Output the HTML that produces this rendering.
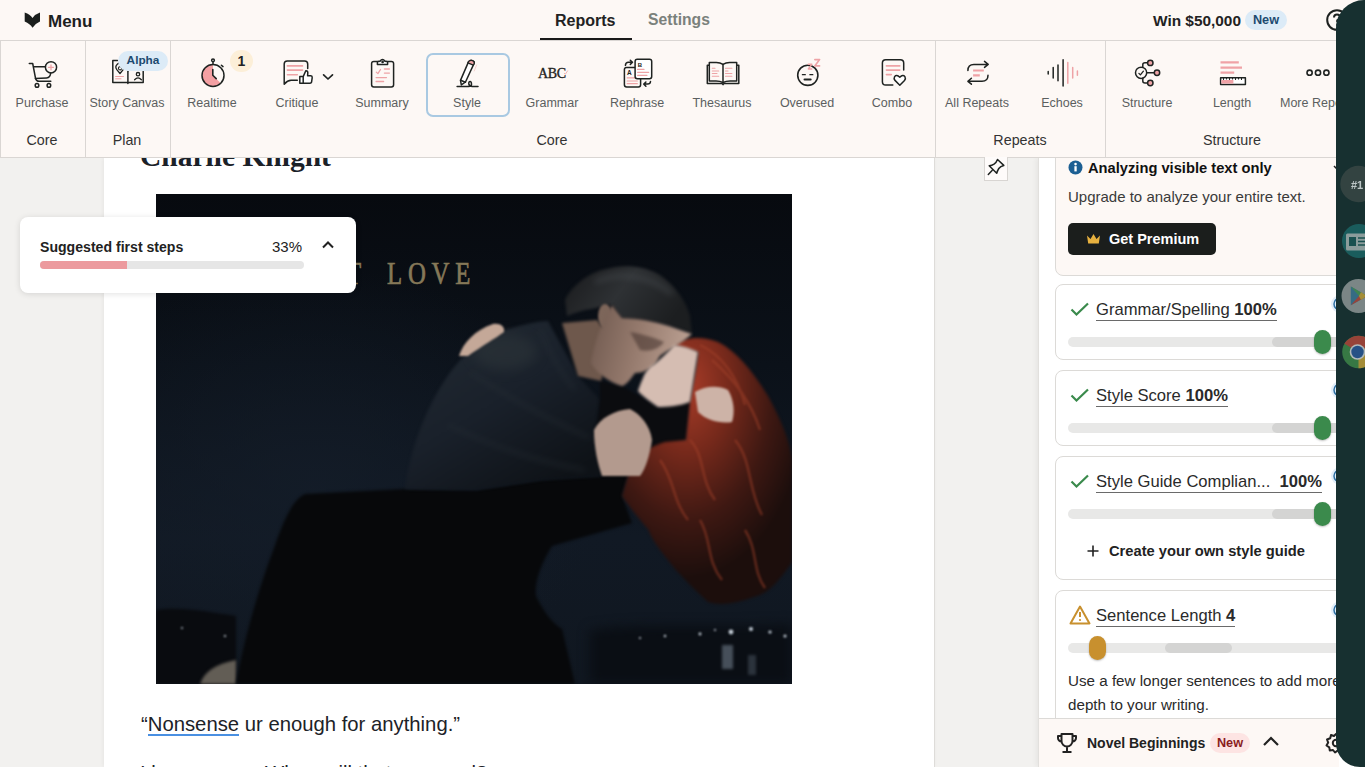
<!DOCTYPE html>
<html><head><meta charset="utf-8">
<style>
*{box-sizing:border-box;margin:0;padding:0}
html,body{width:1365px;height:767px;overflow:hidden;background:#f2f1ef;font-family:"Liberation Sans",sans-serif;color:#222}
.abs{position:absolute;white-space:nowrap}
#hdr{position:absolute;left:0;top:0;width:1365px;height:41px;background:#fdf8f5}
#tb{position:absolute;left:0;top:40px;width:1365px;height:118px;background:#fdf8f5;border-top:1px solid #dad6d3;border-bottom:1px solid #dad6d3;border-left:1px solid #dad6d3}
.vd{position:absolute;top:41px;width:1px;height:116px;background:#dad6d3}
.lbl{position:absolute;top:96px;font-size:12.5px;color:#5b5f5f;white-space:nowrap;text-align:center;width:120px;margin-left:-60px;line-height:15px}
.grp{position:absolute;top:132px;font-size:14.3px;color:#333;white-space:nowrap;text-align:center;width:120px;margin-left:-60px;line-height:17px}
.ico{position:absolute;overflow:visible}
#doc{position:absolute;left:104px;top:158px;width:831px;height:609px;background:#fff;border-right:1px solid #dedcd9;box-shadow:-1px 0 4px rgba(0,0,0,0.05)}
#rp{position:absolute;left:1038px;top:158px;width:298px;height:609px;background:#fff;border-left:1px solid #e2e0dd;box-shadow:-2px 0 5px rgba(0,0,0,0.05)}
.card{position:absolute;left:1055px;width:300px;border:1px solid #dcdad7;border-radius:8px;background:#fff}
.ttl{position:absolute;left:1096px;font-size:16.6px;color:#2a2a2a;white-space:nowrap;line-height:20px;border-bottom:1px solid #6a6a6a;padding-bottom:0}
.trk{position:absolute;left:1068px;height:10px;width:290px;border-radius:5px;background:#e8e8e7}
.thumb{position:absolute;width:17px;height:24px;border-radius:8.5px;background:#3b8a4c;box-shadow:0 1px 2px rgba(0,0,0,.25)}
</style></head><body>
<!-- document -->
<div id="doc"></div>
<div class="abs" style="left:140px;top:139px;font-family:'Liberation Serif',serif;font-weight:bold;font-size:29.5px;color:#1b2128;line-height:34px;white-space:nowrap">Charlie Knight</div>
<svg class="abs" style="left:156px;top:194px" width="636" height="490" viewBox="156 194 636 490">
 <defs>
  <linearGradient id="bg" x1="0" y1="0" x2="0" y2="1">
   <stop offset="0" stop-color="#070a0f"/><stop offset="0.35" stop-color="#0b1119"/><stop offset="0.7" stop-color="#111924"/><stop offset="1" stop-color="#101720"/>
  </linearGradient>
  <radialGradient id="glow" cx="0.25" cy="0.6" r="0.45"><stop offset="0" stop-color="#141d29" stop-opacity="0.8"/><stop offset="1" stop-color="#141d29" stop-opacity="0"/></radialGradient>
  <filter color-interpolation-filters="sRGB" id="b1" x="-30%" y="-30%" width="160%" height="160%"><feGaussianBlur stdDeviation="1"/></filter>
  <filter color-interpolation-filters="sRGB" id="b2" x="-20%" y="-20%" width="140%" height="140%"><feGaussianBlur stdDeviation="1.8"/></filter>
  <filter color-interpolation-filters="sRGB" id="b3" x="-30%" y="-30%" width="160%" height="160%"><feGaussianBlur stdDeviation="3"/></filter>
  <filter color-interpolation-filters="sRGB" id="b6" x="-40%" y="-40%" width="180%" height="180%"><feGaussianBlur stdDeviation="6"/></filter>
  <radialGradient id="hairG" cx="0.38" cy="0.18" r="0.72"><stop offset="0" stop-color="#a83c28"/><stop offset="0.35" stop-color="#76291b"/><stop offset="0.7" stop-color="#3e1812"/><stop offset="1" stop-color="#1c0e0c"/></radialGradient>
  <linearGradient id="shirtG" x1="0" y1="0" x2="0.7" y2="1"><stop offset="0" stop-color="#232b33"/><stop offset="0.55" stop-color="#19202a"/><stop offset="1" stop-color="#0e1217"/></linearGradient>
  <linearGradient id="faceG" x1="0" y1="0" x2="1" y2="0.2"><stop offset="0" stop-color="#6e584e"/><stop offset="0.5" stop-color="#94796c"/><stop offset="1" stop-color="#b99e90"/></linearGradient>
  <linearGradient id="hairM" x1="0" y1="0" x2="1" y2="0.4"><stop offset="0" stop-color="#18191b"/><stop offset="0.5" stop-color="#2e3134"/><stop offset="1" stop-color="#1c1e20"/></linearGradient>
 </defs>
 <rect x="156" y="194" width="636" height="490" fill="url(#bg)"/>
 <rect x="156" y="194" width="636" height="490" fill="url(#glow)"/>
 <!-- city -->
 <path d="M156 610 C180 606 210 612 236 616 L236 684 L156 684Z" fill="#090b0f" filter="url(#b2)"/>
 <path d="M590 630 C650 622 700 628 792 624 L792 684 L590 684Z" fill="#0a0e14" filter="url(#b6)"/>
 <g fill="#c5ced8" filter="url(#b1)">
  <circle cx="731" cy="632" r="2.4"/><circle cx="751" cy="629" r="2"/><circle cx="700" cy="634" r="1.4"/><circle cx="770" cy="632" r="1.6"/><circle cx="665" cy="636" r="1.2"/><circle cx="640" cy="638" r="1"/><circle cx="785" cy="636" r="1.5"/><circle cx="225" cy="636" r="1.1"/><circle cx="182" cy="628" r="0.9"/><circle cx="715" cy="630" r="1"/>
 </g>
 <rect x="722" y="645" width="11" height="24" fill="#8290a0" opacity="0.5" filter="url(#b2)"/>
 <rect x="748" y="655" width="8" height="20" fill="#5d6a78" opacity="0.4" filter="url(#b2)"/>
 <path d="M200 684 C204 672 215 664 236 660 L236 684Z" fill="#625d55" filter="url(#b2)"/>
 <!-- black body mass -->
 <path d="M236 684 C244 640 258 590 274 548 C284 520 292 500 305 494 L405 489 L476 490 L542 480 L602 476 L632 463 L622 496 L632 523 L552 546 C540 565 534 585 536 596 C545 615 555 625 562 629 L575 684Z" fill="#07080a" filter="url(#b2)"/>
 <!-- man's shirt -->
 <path d="M405 489 C410 450 425 410 445 380 C458 360 475 342 505 330 C525 324 540 321 548 321 L578 376 L600 400 L596 430 L602 476 L542 480 L476 490Z" fill="url(#shirtG)" filter="url(#b2)"/>
 <ellipse cx="505" cy="352" rx="32" ry="18" fill="#2c3439" opacity="0.6" filter="url(#b6)"/>
 <g fill="none" stroke="#2e363c" stroke-width="3" opacity="0.45" filter="url(#b3)">
  <path d="M470 372 C500 392 545 418 590 438"/>
  <path d="M448 425 C490 445 535 462 585 470"/>
  <path d="M540 330 C548 350 560 372 575 390"/>
 </g>
 <!-- woman's black top -->
 <path d="M600 381 L622 386 L658 407 L690 402 L686 440 L632 463 L602 476 L596 430 L600 400Z" fill="#0b0c0f" filter="url(#b2)"/>
 <!-- red hair -->
 <path d="M674 344 C685 338 700 335 718 342 C735 350 752 370 768 396 C780 418 790 440 792 460 L792 562 C780 580 770 592 757 596 C735 604 720 606 708 602 C695 590 685 580 675 569 C660 550 652 540 648 529 C640 520 628 505 622 496 L632 463 C640 452 655 445 665 442 L686 440 L690 402 C694 380 697 365 698 352 C690 350 680 348 674 344Z" fill="url(#hairG)" filter="url(#b2)"/>
 <g fill="none" stroke="#a4422a" stroke-width="2.4" opacity="0.5" filter="url(#b1)">
  <path d="M700 345 C722 355 738 378 745 405"/>
  <path d="M712 360 C735 380 752 405 760 430"/>
  <path d="M690 440 C705 455 700 480 715 500"/>
  <path d="M735 440 C752 460 748 490 762 515"/>
  <path d="M660 460 C675 480 672 500 688 520"/>
  <path d="M700 520 C712 540 706 560 722 580"/>
  <path d="M745 530 C758 550 752 570 765 588"/>
 </g>
 <!-- man hair -->
 <path d="M565 300 C572 285 590 272 606 269 C620 265 640 264 658 274 C672 282 686 300 690 316 L692 334 C685 330 675 327 669 326 C655 322 640 318 622 318 L612 305 C600 306 590 310 585 310 C578 312 572 314 567 316Z" fill="url(#hairM)" filter="url(#b2)"/>
 <path d="M595 282 C618 272 648 274 672 294" fill="none" stroke="#4e5256" stroke-width="4" opacity="0.5" filter="url(#b3)"/>
 <!-- man neck, ear & face -->
 <path d="M562 323 L597 320 L612 340 L601 381 L578 376Z" fill="#6e584c" filter="url(#b2)"/>
 <ellipse cx="605" cy="316" rx="7" ry="12" fill="#7d665a" filter="url(#b1)"/>
 <path d="M612 305 L622 318 C640 318 655 322 669 326 L692 334 C680 345 668 350 660 356 L656 363 C650 370 642 373 635 373 C630 380 626 385 622 386 C608 382 596 372 591 363 C594 345 600 325 612 305Z" fill="url(#faceG)" filter="url(#b2)"/>
 <path d="M630 332 C642 334 655 338 664 342 C658 350 648 352 640 350Z" fill="#4a3832" opacity="0.6" filter="url(#b2)"/>
 <!-- woman's face -->
 <path d="M674 345 C680 345 690 348 698 352 L690 402 C680 406 668 407 658 407 C648 400 640 394 638 391 C640 385 642 380 643 378 C645 372 650 366 653 365 C660 360 668 352 674 345Z" fill="#d5bdb2" filter="url(#b2)"/>
 <!-- hands -->
 <path d="M459 356 C463 343 475 330 493 324 C500 323 505 326 504 332 C496 338 482 346 468 356Z" fill="#c4a898" filter="url(#b1)"/>
 <path d="M594 430 C600 418 615 410 630 409 C640 414 650 425 652 440 C650 455 645 470 640 476 L602 476 C598 465 594 448 594 430Z" fill="#b39a8e" filter="url(#b1)"/>
 <path d="M695 392 C705 386 718 385 728 390 C734 400 735 412 732 422 C720 424 706 420 698 412Z" fill="#cdb3a7" filter="url(#b1)"/>
 <!-- title text -->
 <text transform="translate(387,284) scale(0.8,1)" font-family="Liberation Serif" font-size="31" fill="#857858" stroke="#857858" stroke-width="0.7" letter-spacing="7.2">LOVE</text>
 <text transform="translate(346,284) scale(0.8,1)" font-family="Liberation Serif" font-size="31" fill="#857858" stroke="#857858" stroke-width="0.7">T</text>
</svg>
<div class="abs" style="left:141px;top:712px;font-size:20.3px;color:#1d2227;line-height:24px;white-space:nowrap">&ldquo;Nonsense ur enough for anything.&rdquo;</div>
<div class="abs" style="left:148px;top:734px;width:91px;height:2px;background:#4a90e2"></div>
<div class="abs" style="left:140px;top:761px;font-size:20.3px;color:#1d2227;line-height:24px;white-space:nowrap">I know, ur so. When will that ever end?</div>

<!-- suggested first steps card -->
<div class="abs" style="left:20px;top:217px;width:336px;height:76px;background:#fff;border-radius:8px;box-shadow:0 1px 6px rgba(0,0,0,0.12)"></div>
<div class="abs" style="left:40px;top:239px;font-size:14.1px;font-weight:bold;color:#222;line-height:17px;white-space:nowrap">Suggested first steps</div>
<div class="abs" style="left:272px;top:238px;font-size:15px;color:#222;line-height:17px">33%</div>
<svg class="ico" style="left:321px;top:240px" width="14" height="10" viewBox="0 0 14 10"><path d="M2 7.5 L7 2.5 L12 7.5" fill="none" stroke="#222" stroke-width="2"/></svg>
<div class="abs" style="left:40px;top:261px;width:264px;height:8px;border-radius:4px;background:#e6e6e6;overflow:hidden"><div style="width:87px;height:8px;background:#ec9a9e"></div></div>



<!-- right panel -->
<div id="rp"></div>
<!-- card 1 -->
<div class="card" style="top:120px;height:156px;background:#fdf8f5"></div>
<svg class="ico" style="left:1068px;top:160px" width="15" height="15" viewBox="0 0 15 15"><circle cx="7.5" cy="7.5" r="7" fill="#1c5f93"/><rect x="6.4" y="6.2" width="2.3" height="5.2" fill="#fff"/><circle cx="7.55" cy="4.1" r="1.3" fill="#fff"/></svg>
<div class="abs" style="left:1088px;top:159px;font-size:14.7px;font-weight:bold;color:#111;line-height:18px;white-space:nowrap">Analyzing visible text only</div>
<div class="abs" style="left:1068px;top:188px;font-size:15px;color:#3a3a3a;line-height:18px;white-space:nowrap">Upgrade to analyze your entire text.</div>
<div class="abs" style="left:1068px;top:223px;width:148px;height:32px;border-radius:5px;background:#1b1e1c"></div>
<svg class="ico" style="left:1086px;top:233px" width="15" height="12" viewBox="0 0 15 12"><path d="M1 2.5 L4.5 6 L7.5 1 L10.5 6 L14 2.5 L12.8 10.5 L2.2 10.5Z" fill="#e7b13f"/></svg>
<div class="abs" style="left:1109px;top:230px;font-size:14.5px;font-weight:bold;color:#fff;line-height:18px;white-space:nowrap">Get Premium</div>

<svg class="ico" style="left:1330px;top:162px" width="8" height="8" viewBox="0 0 8 8"><path d="M4 4 L7 7" stroke="#222" stroke-width="1.5"/></svg>
<!-- card 2 -->
<div class="card" style="top:284px;height:76px"></div>
<svg class="ico" style="left:1070px;top:302px" width="20" height="15" viewBox="0 0 20 15"><path d="M1.5 7.5 L6.5 12.5 L18 1.5" fill="none" stroke="#3a8a4c" stroke-width="2.2"/></svg>
<div class="ttl" style="top:300px">Grammar/Spelling <b>100%</b></div>
<div class="trk" style="top:337px"></div>
<div class="abs" style="left:1272px;top:337px;width:80px;height:10px;border-radius:5px;background:#d4d4d3"></div>
<div class="thumb" style="left:1314px;top:330px"></div>

<!-- card 3 -->
<div class="card" style="top:370px;height:76px"></div>
<svg class="ico" style="left:1070px;top:388px" width="20" height="15" viewBox="0 0 20 15"><path d="M1.5 7.5 L6.5 12.5 L18 1.5" fill="none" stroke="#3a8a4c" stroke-width="2.2"/></svg>
<div class="ttl" style="top:386px">Style Score <b>100%</b></div>
<div class="trk" style="top:423px"></div>
<div class="abs" style="left:1272px;top:423px;width:80px;height:10px;border-radius:5px;background:#d4d4d3"></div>
<div class="thumb" style="left:1314px;top:416px"></div>

<!-- card 4 -->
<div class="card" style="top:456px;height:124px"></div>
<svg class="ico" style="left:1070px;top:474px" width="20" height="15" viewBox="0 0 20 15"><path d="M1.5 7.5 L6.5 12.5 L18 1.5" fill="none" stroke="#3a8a4c" stroke-width="2.2"/></svg>
<div class="ttl" style="top:472px">Style Guide Complian...&nbsp; <b>100%</b></div>
<div class="trk" style="top:509px"></div>
<div class="abs" style="left:1272px;top:509px;width:80px;height:10px;border-radius:5px;background:#d4d4d3"></div>
<div class="thumb" style="left:1314px;top:502px"></div>
<svg class="ico" style="left:1087px;top:545px" width="12" height="12" viewBox="0 0 12 12"><path d="M6 0.5 V11.5 M0.5 6 H11.5" stroke="#222" stroke-width="1.6"/></svg>
<div class="abs" style="left:1109px;top:542px;font-size:14.7px;font-weight:bold;color:#222;line-height:18px;white-space:nowrap">Create your own style guide</div>

<!-- card 5 -->
<div class="card" style="top:590px;height:200px"></div>
<svg class="ico" style="left:1069px;top:605px" width="22" height="20" viewBox="0 0 22 20"><path d="M11 1.5 L20.5 18.5 H1.5Z" fill="none" stroke="#c8902e" stroke-width="2" stroke-linejoin="round"/><path d="M11 7 V12" stroke="#c8902e" stroke-width="2"/><circle cx="11" cy="15" r="1.1" fill="#c8902e"/></svg>
<div class="ttl" style="top:606px">Sentence Length <b>4</b></div>
<div class="trk" style="top:643px"></div>
<div class="abs" style="left:1165px;top:643px;width:67px;height:10px;border-radius:5px;background:#d4d4d3"></div>
<div class="thumb" style="left:1089px;top:636px;background:#c8902e"></div>
<div class="abs" style="left:1068px;top:669px;font-size:15.2px;color:#2a2a2a;line-height:24px;white-space:nowrap">Use a few longer sentences to add more<br>depth to your writing.</div>

<svg class="ico" style="left:1326px;top:294px" width="20" height="20" viewBox="0 0 20 20"><circle cx="14" cy="10" r="9" fill="#e3eef8"/><circle cx="14" cy="10" r="6" fill="none" stroke="#2d6fa3" stroke-width="1.5"/></svg>
<svg class="ico" style="left:1326px;top:380px" width="20" height="20" viewBox="0 0 20 20"><circle cx="14" cy="10" r="9" fill="#e3eef8"/><circle cx="14" cy="10" r="6" fill="none" stroke="#2d6fa3" stroke-width="1.5"/></svg>
<svg class="ico" style="left:1326px;top:466px" width="20" height="20" viewBox="0 0 20 20"><circle cx="14" cy="10" r="9" fill="#e3eef8"/><circle cx="14" cy="10" r="6" fill="none" stroke="#2d6fa3" stroke-width="1.5"/></svg>
<svg class="ico" style="left:1326px;top:600px" width="20" height="20" viewBox="0 0 20 20"><circle cx="14" cy="10" r="9" fill="#e3eef8"/><circle cx="14" cy="10" r="6" fill="none" stroke="#2d6fa3" stroke-width="1.5"/></svg>
<!-- bottom bar -->
<div class="abs" style="left:1039px;top:718px;width:300px;height:49px;background:#fdf8f5;border-top:1px solid #dcdad7"></div>
<svg class="ico" style="left:1056px;top:732px" width="22" height="22" viewBox="0 0 22 22"><path d="M5.5 2 H16.5 V9 A5.5 5.5 0 0 1 5.5 9Z M5.5 4 H2 V6 A3.5 3.5 0 0 0 5.6 9.5 M16.5 4 H20 V6 A3.5 3.5 0 0 1 16.4 9.5 M11 14.5 V19.5 M6.5 20 H15.5" fill="none" stroke="#222" stroke-width="2" stroke-linejoin="round"/></svg>
<div class="abs" style="left:1087px;top:734px;font-size:14px;font-weight:bold;color:#222;line-height:18px;white-space:nowrap">Novel Beginnings</div>
<div class="abs" style="left:1210px;top:733px;width:40px;height:20px;border-radius:10px;background:#fde4e3;color:#8a1c1c;font-size:12.7px;font-weight:bold;line-height:20px;text-align:center">New</div>
<svg class="ico" style="left:1262px;top:735px" width="18" height="12" viewBox="0 0 18 12"><path d="M2 10 L9 3 L16 10" fill="none" stroke="#222" stroke-width="2.2"/></svg>
<svg class="ico" style="left:1325px;top:732px" width="22" height="22" viewBox="0 0 22 22"><circle cx="11" cy="11" r="3.2" fill="none" stroke="#222" stroke-width="2"/><path d="M11 2 L13 4.5 L16.5 3.8 L17 7.2 L20 9 L18.3 11.9 L19.8 15 L16.5 16.2 L15.8 19.5 L12.6 18.6 L10 20.5 L8 18 L4.8 18.6 L4.3 15.3 L1.5 13.5 L3.2 10.6 L2 7.5 L5.2 6.3 L6 3 L9 4Z" fill="none" stroke="#222" stroke-width="2" stroke-linejoin="round"/></svg>


<div style="position:absolute;left:0;top:0;z-index:5">
<!-- header -->
<div id="hdr"></div>
<svg class="ico" style="left:20px;top:8px" width="26" height="24" viewBox="20 8 26 24"><path d="M24.7 12.4 Q30 14 32.5 18 Q35 14 40 12.4 V21.4 Q35 23.5 32.5 27.7 Q30 23.5 24.7 21.4Z" fill="#1a1e1c"/></svg>
<div class="abs" style="left:48px;top:12px;font-size:17px;font-weight:bold;color:#1d211f;line-height:20px">Menu</div>
<div class="abs" style="left:555px;top:11px;font-size:16px;font-weight:bold;color:#222;line-height:19px">Reports</div>
<div class="abs" style="left:648px;top:10px;font-size:15.7px;font-weight:bold;color:#7b817c;line-height:19px">Settings</div>
<div class="abs" style="left:540px;top:38px;width:92px;height:2.5px;background:#1a1a1a"></div>
<div class="abs" style="left:1153px;top:11.5px;font-size:15.4px;font-weight:bold;color:#222;line-height:18px">Win $50,000</div>
<div class="abs" style="left:1245px;top:10px;width:42px;height:20px;border-radius:10px;background:#dcebf7;color:#1d4a70;font-size:12.7px;font-weight:bold;line-height:20px;text-align:center">New</div>
<svg class="ico" style="left:1326px;top:9px" width="22" height="22" viewBox="0 0 22 22"><circle cx="11" cy="11" r="9.8" fill="none" stroke="#1d211f" stroke-width="2"/><path d="M8 8.5 Q8 5.6 11 5.6 Q14 5.6 14 8.3 Q14 10 11.2 11.3 V13" fill="none" stroke="#1d211f" stroke-width="2"/><circle cx="11.2" cy="16" r="1.1" fill="#1d211f"/></svg>

<!-- toolbar -->
<div id="tb"></div>
<div class="vd" style="left:85px"></div>
<div class="vd" style="left:170px"></div>
<div class="vd" style="left:935px"></div>
<div class="vd" style="left:1105px"></div>

<div class="lbl" style="left:42px">Purchase</div>
<div class="lbl" style="left:127px">Story Canvas</div>
<div class="lbl" style="left:212px">Realtime</div>
<div class="lbl" style="left:297px">Critique</div>
<div class="lbl" style="left:382px">Summary</div>
<div class="abs" style="left:426px;top:53px;width:84px;height:64px;border:2px solid #a9c9e2;border-radius:7px"></div>
<div class="lbl" style="left:467px">Style</div>
<div class="lbl" style="left:552px">Grammar</div>
<div class="lbl" style="left:637px">Rephrase</div>
<div class="lbl" style="left:722px">Thesaurus</div>
<div class="lbl" style="left:807px">Overused</div>
<div class="lbl" style="left:892px">Combo</div>
<div class="lbl" style="left:977px">All Repeats</div>
<div class="lbl" style="left:1062px">Echoes</div>
<div class="lbl" style="left:1147px">Structure</div>
<div class="lbl" style="left:1232px">Length</div>
<div class="lbl" style="left:1280px;margin-left:0;text-align:left">More Repeats</div>


<svg class="abs" style="left:0;top:40px" width="1365" height="118" viewBox="0 40 1365 118">
 <g fill="none" stroke="#1f2321" stroke-width="1.5" stroke-linecap="round" stroke-linejoin="round">
  <!-- purchase cart -->
  <path d="M29.3 63.5 H32.7 L35.6 78.7 Q36.5 81.3 39 81.3 H50.8"/>
  <path d="M34.1 66.8 H45.4"/>
  <path d="M50.6 73 Q50.5 77.6 46.5 77.9 L35.4 78.5"/>
  <circle cx="51" cy="67.3" r="5.6"/>
  <circle cx="37" cy="85.4" r="1.8"/><circle cx="48.9" cy="85.4" r="1.8"/>
  <path d="M51 64.8 V69.8 M48.5 67.3 H53.5" stroke="#eea3a6" stroke-width="1.3"/>
  <!-- story canvas book -->
  <path d="M117.5 60.6 H112.8 V82.5 H143.2 V71.3"/>
  <path d="M127.9 71.3 V83.6"/>
  <path d="M120 73.5 L116.8 69.6 A4 4 0 1 1 123.2 69.6Z" stroke-width="1.3"/><path d="M121.6 68.6 A1.6 1.6 0 1 1 121 67" stroke-width="1.1"/>
  <circle cx="138" cy="74.2" r="1.7" stroke-width="1.3"/>
  <path d="M134.6 79.8 Q138 76 141.4 79.8" stroke-width="1.3"/>
  <path d="M115.6 76.5 H123.5 M115.6 78.8 H121" stroke="#eea3a6" stroke-width="1"/>
  <!-- realtime stopwatch -->
  <path d="M213 75.5 V64.5 A11 11 0 1 0 220.8 83.3Z" fill="#f4a0a3" stroke="none"/>
  <circle cx="213" cy="75.5" r="11"/>
  <path d="M212.8 69.5 V75.2 L216.2 78.6" stroke-width="1.6"/>
  <circle cx="213" cy="60.3" r="1.4"/><path d="M213 61.7 V64.2"/>
  <path d="M221.4 65.2 L223 66.6"/>
  <!-- critique -->
  <path d="M307.7 68.6 V64 Q307.7 60.9 304.6 60.9 H287.3 Q284.2 60.9 284.2 64 V84.2 Q287.5 80.3 291.1 80.3 H297.3"/>
  <path d="M287.4 65.9 H302.5 M287.4 70.1 H302.5 M287.4 74.8 H297.3" stroke="#eea3a6" stroke-width="1.6"/>
  <path d="M303.2 76.6 L305.8 70.8 Q307.6 70.5 307.8 72.6 L307.6 75.7 H310.8 Q312.4 75.9 312.2 77.6 L311.6 82 Q311.3 83.2 310 83.2 H303.2Z M299.8 76.6 H303.2 V83.2 H299.8Z" fill="#fff"/>
  <path d="M323.6 74.8 L328 79 L332.5 74.8" stroke-width="1.7"/>
  <!-- summary clipboard -->
  <rect x="371.6" y="61.4" width="22" height="25.5" rx="2.2"/>
  <path d="M377.4 64.5 V62.3 Q377.4 61.6 378.4 61.4 L380 61.2 Q382.5 57.8 385 61.2 L386.6 61.4 Q387.6 61.6 387.6 62.3 V64.5Z" fill="#fff"/>
  <circle cx="382.6" cy="61.9" r="0.6" fill="#1f2321"/>
  <path d="M376.3 72.1 L377.9 73.6 L380.5 69.5 M384.4 69 H389.4 M384.4 73.1 H389.4 M376.1 77.6 H386.5 M376.1 81.5 H383.6" stroke="#eea3a6" stroke-width="1.3"/>
  <!-- style pencil -->
  <path d="M468.6 61.6 Q470 59.8 472.5 60.6 Q474.8 61.6 474.1 63.4 L465.5 82 L461.3 84.9 L460.5 80.4Z" fill="#fff"/>
  <path d="M468.6 61.6 Q470 59.8 472.5 60.6 Q474.8 61.6 474.1 63.4 L473.3 65.2 L467.9 62.8Z" fill="#eea3a6" stroke-width="1.3"/>
  <path d="M460.6 80.3 L465.4 82.2"/>
  <path d="M457.1 86.4 H468.5 Q471.5 86.4 471.5 84.4 Q471.5 81.6 470.1 81.6 Q468.6 81.6 468.8 84 Q469.3 86.4 472.3 86.4 H478"/>
  <path d="M476.6 65 L474.2 71" stroke="#eea3a6" stroke-width="0.8" opacity="0.6"/>
  <!-- rephrase -->
  <rect x="624.4" y="67.4" width="16.2" height="19.6" rx="2.2"/>
  <path d="M627.2 77.8 H635 M627.2 81 H637.3 M627.2 83.7 H637.3" stroke="#eea3a6" stroke-width="1.2"/>
  <rect x="635.1" y="59.2" width="16.6" height="19.6" rx="2.2" fill="#fff"/>
  <path d="M637.6 69.4 H644 M637.6 72.3 H648.7 M637.6 75.3 H647" stroke="#eea3a6" stroke-width="1.2"/>
  <path d="M625.4 65.4 Q625.6 62.3 628.5 62.3 H632.4 M630.3 60.2 L632.5 62.3 L630.3 64.4"/>
  <path d="M650.5 81.5 Q650.3 84.1 647.6 84.1 H643.8 M645.9 82 L643.8 84.1 L645.9 86.2"/>
  <!-- thesaurus -->
  <path d="M709.3 65.3 H707.3 V83.5 H722 L723 84.6 L724 83.5 H738.8 V65.3 H736.7"/>
  <path d="M723 64.4 Q720 62.4 716 62.5 H709.3 V81 H716 Q720 81 723 82.5 Q726 81 730 81 H736.7 V62.5 H730 Q726 62.4 723 64.4Z"/>
  <path d="M723 64.4 V82.5"/>
  <path d="M712.3 68.2 H715 M712.3 71 H718.7 M712.3 73.5 H717 M712.3 76.2 H718.7 M725.5 68.2 H731.9 M725.5 71 H728 M725.5 73.5 H731.9 M725.5 76.2 H731.9" stroke="#eea3a6" stroke-width="1.1"/>
  <!-- overused -->
  <circle cx="807.8" cy="75.3" r="10.1" stroke-width="1.6"/>
  <path d="M802.4 74.7 H805.3 M809.9 74.7 H812.8" stroke-width="1.3"/>
  <path d="M804.6 79.5 H810.6" stroke-width="2.2"/>
  <path d="M808.3 64.3 H811.8 L808.3 69 H811.8" stroke="#eea3a6" stroke-width="1.4"/>
  <path d="M814.8 59.6 H819.6 L814.8 65.9 H819.6" stroke="#eea3a6" stroke-width="1.6"/>
  <!-- combo -->
  <path d="M903.7 69.9 V63 Q903.7 59.7 900.4 59.7 H885.7 Q882.4 59.7 882.4 63 V81.7 Q882.4 85 885.7 85 H892.8"/>
  <path d="M886.4 65.9 H899.8 M886.4 70.1 H899.8 M886.4 74.6 H891.3" stroke="#eea3a6" stroke-width="1.6"/>
  <path d="M899.8 85.2 L895 80.4 Q893.5 78.6 894.6 76.6 Q896.5 74.2 899.8 77.2 Q903 74.2 904.9 76.6 Q906 78.6 904.5 80.4Z" fill="#fff"/>
  <!-- all repeats -->
  <path d="M967.9 70.4 Q967.9 64.4 973.9 64.4 H988.2 M984.5 61.4 L988.2 64.4 L984.5 67.4"/>
  <path d="M988 75.3 Q988 81.3 982 81.3 H967.9 M971.4 78.3 L967.9 81.3 L971.4 84.2"/>
  <path d="M973.1 70.5 H983.8 M973.1 75.4 H979.8" stroke="#f0a2a6" stroke-width="2.2" stroke-linecap="butt"/>
  <!-- echoes -->
  <path d="M1048.2 71.6 V74.1 M1053.2 67.6 V78 M1058 64.9 V80.8 M1063.1 59.7 V86"/>
  <path d="M1067.8 62.4 V83.2 M1072.7 67.6 V78 M1077.4 70.9 V75.3" stroke="#eea3a6"/>
  <!-- structure -->
  <circle cx="1141.1" cy="72.8" r="5.6" stroke-width="1.5"/>
  <path d="M1138.9 73.4 L1140.4 74.9 L1143.4 71.2" stroke-width="1.3"/>
  <path d="M1142.8 67.3 V64.6 Q1142.8 62.8 1145 62.8 H1147.5 M1146.8 72.8 H1154.2 M1142.8 78.3 V81 Q1142.8 83 1145 83 H1147.5"/>
  <circle cx="1150.3" cy="62.9" r="2.7" fill="#eea3a6"/>
  <circle cx="1157" cy="72.8" r="2.7" fill="#eea3a6"/>
  <circle cx="1150.3" cy="83" r="2.7" fill="#eea3a6"/>
  <!-- length -->
  <path d="M1220.5 62.3 H1238.8 M1220.5 67.6 H1242 M1220.5 72.6 H1234.2" stroke="#f0a2a6" stroke-width="2.2" stroke-linecap="butt"/>
  <rect x="1220.6" y="77.8" width="24.8" height="6.6" fill="#fff" stroke-width="1.5" stroke-linecap="butt"/>
  <rect x="1221.4" y="80" width="12" height="3.6" fill="#f0a2a6" stroke="none"/>
  <path d="M1223.5 78 V80 M1226.5 78 V79.5 M1229.5 78 V80 M1232.5 78 V79.5 M1235.5 78 V80 M1238.5 78 V79.5 M1241.5 78 V80" stroke-width="1" stroke-linecap="butt"/>
  <!-- more dots -->
  <circle cx="1309.6" cy="72.7" r="2.6" stroke-width="1.6"/><circle cx="1318" cy="72.7" r="2.6" stroke-width="1.6"/><circle cx="1326.4" cy="72.7" r="2.6" stroke-width="1.6"/>
 </g>
 <text x="538" y="77.7" font-family="Liberation Serif" font-size="14" fill="#1f2321" stroke="#1f2321" stroke-width="0.35" letter-spacing="-0.3">ABC</text>
 <text x="627" y="74.8" font-family="Liberation Sans" font-size="6.5" font-weight="bold" fill="#1f2321">A</text>
 <text x="637.8" y="66.6" font-family="Liberation Sans" font-size="6" font-weight="bold" fill="#1f2321">B</text>
 <path d="M564 73 L565.3 74.3 L567.8 70.5" fill="none" stroke="#eea3a6" stroke-width="0.8"/>
</svg>
<div class="grp" style="left:42px">Core</div>
<div class="grp" style="left:127px">Plan</div>
<div class="grp" style="left:552px">Core</div>
<div class="grp" style="left:1020px">Repeats</div>
<div class="grp" style="left:1232px">Structure</div>

<div class="abs" style="left:118px;top:51px;width:50px;height:20px;border-radius:10px;background:#dcebf7;color:#1d4a70;font-size:11.8px;font-weight:bold;line-height:19px;text-align:center">Alpha</div>
<div class="abs" style="left:230px;top:50px;width:23px;height:22px;border-radius:11px;background:#fcefd8;color:#222;font-size:14px;font-weight:bold;line-height:22px;text-align:center">1</div>

</div>
<div style="position:absolute;left:0;top:0;z-index:6">
<div class="abs" style="left:984px;top:157px;width:24px;height:24px;background:#fefbfa;border:1px solid #d8d5d2;border-top:none"></div>
<svg class="abs" style="left:980px;top:152px" width="32" height="32" viewBox="980 152 32 32"><path d="M988.3 174.5 L992.1 170.4 M997.5 159.5 L1003.8 165.4 Q1000.5 166 998.8 168.5 Q997.3 171 996.7 173.3 L989.2 165.8 Q992 165.5 994 164.2 Q996.5 162.3 997.5 159.5Z" fill="none" stroke="#1f2321" stroke-width="1.5" stroke-linejoin="round" stroke-linecap="round"/></svg>
</div>
<!-- dark side shelf -->
<div class="abs" style="z-index:10;left:1336px;top:0;width:60px;height:767px;background:#173030;border-radius:28px 0 0 24px"></div>


<svg class="abs" style="z-index:11;left:1336px;top:150px;opacity:0.8" width="29" height="240" viewBox="1336 150 29 240">
 <circle cx="1358.5" cy="184" r="18.2" fill="#3b4846"/>
 <text x="1351" y="188.7" font-family="Liberation Sans" font-weight="bold" font-size="11" fill="#e6ecec">#1</text>
 <circle cx="1359" cy="241" r="17" fill="#1b6868"/>
 <rect x="1346" y="233.5" width="22" height="17" rx="1.5" fill="#a8b8b6"/>
 <rect x="1349" y="237" width="7" height="9" fill="#1b5a58"/>
 <path d="M1358 238 H1365 M1358 241.5 H1365 M1358 245 H1365" stroke="#1b5a58" stroke-width="1.5"/>
 <circle cx="1358.5" cy="296" r="17" fill="#949c9c"/>
 <path d="M1350.8 286.5 L1367 296 L1350.8 305.2Z" fill="#3d7a9a"/>
 <path d="M1350.8 286.5 L1367 296 L1359 296Z" fill="#4a9a58"/>
 <path d="M1359 296 L1367 296 L1350.8 305.2Z" fill="#b84a3e"/>
 <path d="M1361 292 L1367 296 L1361 300 L1359 296Z" fill="#c9a63a"/>
 <circle cx="1358.5" cy="352" r="16.3" fill="#3f8a4a"/>
 <path d="M1358.5 352 L1344.4 343.85 A16.3 16.3 0 0 1 1372.6 343.85Z" fill="#b8483a"/>
 <path d="M1358.5 352 L1372.6 343.85 A16.3 16.3 0 0 1 1358.5 368.3Z" fill="#c8a53a"/>
 <circle cx="1357.5" cy="352" r="7.8" fill="#d8dcdc"/>
 <circle cx="1357.5" cy="352" r="6.2" fill="#2a5a9c"/>
</svg>
</body></html>
